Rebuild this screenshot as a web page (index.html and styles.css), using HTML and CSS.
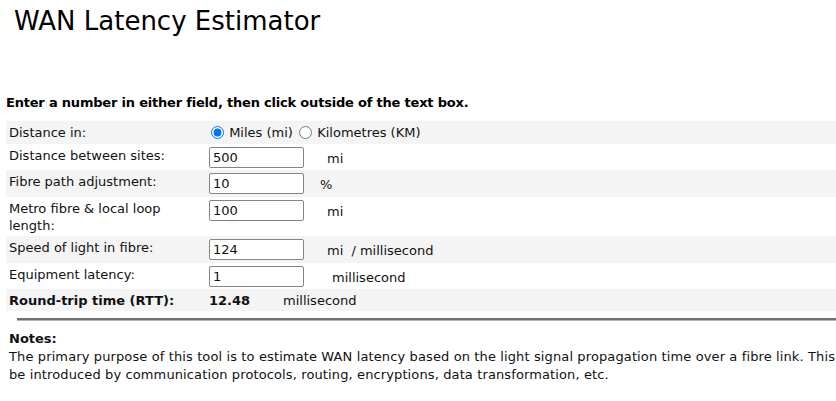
FILE: index.html
```html
<!DOCTYPE html>
<html lang="en">
<head>
    <meta charset="UTF-8">
    <meta name="viewport" content="width=device-width, initial-scale=1.0">
    <title>WAN Latency Estimator</title>
    <link rel="stylesheet" href="styles.css">
</head>
<body>
    <div class="page">
        <h1 class="title">WAN Latency Estimator</h1>

        <p class="intro">Enter a number in either field, then click outside of the text box.</p>

        <!-- Calculator -->
        <table class="calc">
            <tbody>
                <tr class="shade">
                    <td class="label">Distance in:</td>
                    <td class="field">
                        <label class="choice"><input type="radio" name="unit" value="mi" checked> Miles (mi)</label>
                        <label class="choice"><input type="radio" name="unit" value="km"> Kilometres (KM)</label>
                    </td>
                </tr>
                <tr>
                    <td class="label">Distance between sites:</td>
                    <td class="field"><input type="text" class="num" id="distance" value="500"><span class="unit">mi</span></td>
                </tr>
                <tr class="shade">
                    <td class="label">Fibre path adjustment:</td>
                    <td class="field"><input type="text" class="num" id="adjust" value="10"><span class="unit unit-pct">%</span></td>
                </tr>
                <tr>
                    <td class="label">Metro fibre &amp; local loop length:</td>
                    <td class="field"><input type="text" class="num" id="metro" value="100"><span class="unit">mi</span></td>
                </tr>
                <tr class="shade">
                    <td class="label">Speed of light in fibre:</td>
                    <td class="field"><input type="text" class="num" id="speed" value="124"><span class="unit">mi <span class="slash">/ millisecond</span></span></td>
                </tr>
                <tr>
                    <td class="label">Equipment latency:</td>
                    <td class="field"><input type="text" class="num" id="equip" value="1"><span class="unit unit-ms">millisecond</span></td>
                </tr>
                <tr class="shade result">
                    <td class="label"><b>Round-trip time (RTT):</b></td>
                    <td class="field"><b class="rtt" id="rtt">12.48</b><span class="rtt-unit">millisecond</span></td>
                </tr>
            </tbody>
        </table>

        <hr class="rule">

        <div class="notes">
            <b>Notes:</b><br>
            <span class="notes-text">The primary purpose of this tool is to estimate WAN latency based on the light signal propagation time over a fibre link. This<br>
            be introduced by communication protocols, routing, encryptions, data transformation, etc.</span>
        </div>
    </div>

    <script>
        // recalc RTT when a field loses focus
        function calc() {
            var d = parseFloat(document.getElementById('distance').value) || 0;
            var adj = parseFloat(document.getElementById('adjust').value) || 0;
            var metro = parseFloat(document.getElementById('metro').value) || 0;
            var speed = parseFloat(document.getElementById('speed').value) || 1;
            var equip = parseFloat(document.getElementById('equip').value) || 0;
            var oneWay = (d * (1 + adj / 100) + metro) / speed + equip;
            document.getElementById('rtt').textContent = (oneWay * 2).toFixed(2);
        }

        document.querySelectorAll('.num').forEach(function (el) {
            el.addEventListener('change', calc);
        });
    </script>
</body>
</html>
```

FILE: styles.css
```css
* {
    box-sizing: border-box;
}

html, body {
    margin: 0;
    padding: 0;
    overflow: hidden;
}

body {
    font-family: "DejaVu Sans", Verdana, sans-serif;
    font-size: 13px;
    line-height: 17px;
    color: #111;
    background: #fff;
}

.page {
    padding-left: 6px;
}

.title {
    font-size: 26px;
    font-weight: normal;
    line-height: 30px;
    margin: 6px 0 0 8px;
    color: #000;
}

.intro {
    font-weight: bold;
    letter-spacing: -0.2px;
    margin: 58px 0 10px 0;
    color: #000;
}

.calc {
    width: 100%;
    border-collapse: collapse;
}

.calc td {
    padding: 3px 3px 2px;
    vertical-align: top;
}

.calc tr.shade td {
    padding-bottom: 3px;
}

.calc tr.result td {
    padding-bottom: 2px;
}

.calc .label {
    width: 200px;
}

.calc tr.shade {
    background-color: #f4f4f4;
}

.choice input {
    margin: 0 1px 0 2px;
    width: 13px;
    height: 13px;
    vertical-align: -2px;
    accent-color: #0075ff;
}

.num {
    width: 95px;
    height: 21px;
    padding: 0 3px;
    border: 1px solid #858585;
    border-radius: 2px;
    font-family: inherit;
    font-size: 13px;
    color: #111;
    vertical-align: top;
}

.unit {
    display: inline-block;
    margin-left: 23px;
    padding-top: 3px;
}

.unit-pct {
    margin-left: 16px;
}

.unit-ms {
    margin-left: 28px;
}

.slash {
    margin-left: 4px;
}

.rtt {
    display: inline-block;
    width: 74px;
}

.rule {
    margin: 7px 0 0 11px;
    border: 0;
    border-top: 2px solid #707070;
    border-bottom: 1px solid #b5b5b5;
    height: 0;
}

.notes {
    margin-top: 9px;
    padding-left: 3px;
    line-height: 18px;
    white-space: nowrap;
}

.notes-text {
    letter-spacing: 0.12px;
}
```
